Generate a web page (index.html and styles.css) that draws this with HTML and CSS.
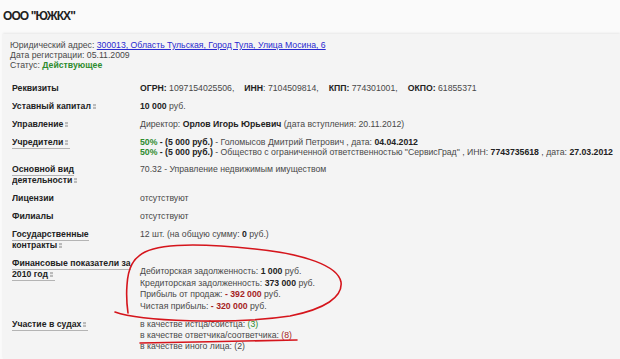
FILE: index.html
```html
<!DOCTYPE html>
<html lang="ru">
<head>
<meta charset="utf-8">
<link rel="stylesheet" href="styles.css">
</head>
<body>
<h1 class="title">ООО "ЮЖКХ"</h1>
<div class="panel">
  <div class="info">
    <div>Юридический адрес: <a class="link" href="#">300013, Область Тульская, Город Тула, Улица Мосина, 6</a></div>
    <div>Дата регистрации: 05.11.2009</div>
    <div>Статус: <b class="green">Действующее</b></div>
  </div>
  <div class="rows">
    <div class="label"><span class="plain">Реквизиты</span></div>
    <div class="value"><b>ОГРН:</b> 1097154025506,<span class="sep"><b>ИНН</b>: 7104509814,</span><span class="sep"><b>КПП:</b> 774301001,</span><span class="sep"><b>ОКПО:</b> 61855371</span></div>

    <div class="label"><span class="ul">Уставный капитал<i class="ic"></i></span></div>
    <div class="value"><b>10 000</b> руб.</div>

    <div class="label"><span class="ul">Управление<i class="ic"></i></span></div>
    <div class="value">Директор: <b>Орлов Игорь Юрьевич</b> (дата вступления: 20.11.2012)</div>

    <div class="label"><span class="ul">Учредители<i class="ic"></i></span></div>
    <div class="value">
      <div><b class="green">50%</b> <b>- (5 000 руб.)</b> - Голомысов Дмитрий Петрович , дата: <b>04.04.2012</b></div>
      <div><b class="green">50%</b> <b>- (5 000 руб.)</b> - Общество с ограниченной ответственностью "СервисГрад" , ИНН: <b>7743735618</b> , дата: <b>27.03.2012</b></div>
    </div>

    <div class="label"><span class="ul">Основной вид<br>деятельности<i class="ic"></i></span></div>
    <div class="value">70.32 - Управление недвижимым имуществом</div>

    <div class="label"><span class="plain">Лицензии</span></div>
    <div class="value">отсутствуют</div>

    <div class="label"><span class="plain">Филиалы</span></div>
    <div class="value">отсутствуют</div>

    <div class="label"><span class="ul">Государственные<br>контракты<i class="ic"></i></span></div>
    <div class="value">12 шт. (на общую сумму: <b>0</b> руб.)</div>

    <div class="label"><span class="ul">Финансовые показатели за<br>2010 год<i class="ic"></i></span></div>
    <div class="value fin">
      <div>Дебиторская задолженность: <b>1 000</b> руб.</div>
      <div>Кредиторская задолженность: <b>373 000</b> руб.</div>
      <div>Прибыль от продаж: <b class="red">- 392 000</b> руб.</div>
      <div>Чистая прибыль: <b class="red">- 320 000</b> руб.</div>
    </div>

    <div class="label"><span class="ul">Участие в судах<i class="ic"></i></span></div>
    <div class="value court">
      <div><span class="ulc">в качестве истца/соистца:</span> <span class="green">(3)</span></div>
      <div><span class="ulc">в качестве ответчика/соответчика:</span> <span class="red">(8)</span></div>
      <div><span class="ulc">в качестве иного лица:</span> (2)</div>
    </div>
  </div>
</div>
<svg class="marks" width="620" height="359" viewBox="0 0 620 359">
  <path d="M115,312 C140,321 230,325 290,316 C325,309 343,297 341,282 C338,266 305,254 255,249 C210,244 165,242 145,252 C133,258 128,268 127,285 C126,298 127,306 128,313" fill="none" stroke="#d5151c" stroke-width="1.6" stroke-linecap="round"/>
  <path d="M140,343 C190,342 250,341 297,340" fill="none" stroke="#d5151c" stroke-width="1.6" stroke-linecap="round"/>
</svg>
</body>
</html>
```
FILE: styles.css
```css
html, body {
  margin: 0;
  padding: 0;
}
body {
  background: #fafafa;
  font-family: "Liberation Sans", Arial, sans-serif;
  font-size: 8.7px;
  color: #484848;
  width: 620px;
  height: 359px;
  overflow: hidden;
  position: relative;
}
.title {
  margin: 0;
  padding: 9px 0 0 3px;
  height: 25px;
  box-sizing: border-box;
  font-size: 12px;
  letter-spacing: -0.9px;
  line-height: 15px;
  font-weight: bold;
  color: #222;
}
.panel {
  margin: 9px 0 0 3px;
  background: #f4f4f4;
  box-shadow: 0 -1px 2px rgba(0, 0, 0, 0.08);
  height: 325px;
  padding: 6px 0 0 7px;
  box-sizing: border-box;
}
.info {
  line-height: 10px;
}
.link {
  color: #2a2ad0;
  text-decoration: underline;
}
.green {
  color: #2e8b2e;
}
.red {
  color: #a52323;
}
b {
  color: #222;
}
b.green {
  color: #2e8b2e;
}
b.red {
  color: #a52323;
}
.rows {
  margin-top: 13px;
  margin-left: 2px;
  display: grid;
  grid-template-columns: 120px 1fr;
  column-gap: 8px;
  row-gap: 7px;
}
.label {
  font-weight: bold;
  color: #222;
  line-height: 11px;
  white-space: nowrap;
  overflow: hidden;
}
.ul {
  border-bottom: 1px solid #b4b4b4;
  padding-bottom: 1px;
  padding-right: 2px;
}
.ic {
  display: inline-block;
  width: 3px;
  height: 5px;
  margin-left: 2px;
  background: linear-gradient(#bbb 0 40%, #e8e8e8 40% 60%, #bbb 60% 100%);
  vertical-align: 0;
}
.value {
  line-height: 10px;
}
.value.fin {
  padding-top: 8px;
  line-height: 11.5px;
}
.value.court {
  line-height: 11px;
}
.sep {
  margin-left: 10px;
}
.ulc {
  color: #484848;
}
.marks {
  position: absolute;
  left: 0;
  top: 0;
  pointer-events: none;
}
```
